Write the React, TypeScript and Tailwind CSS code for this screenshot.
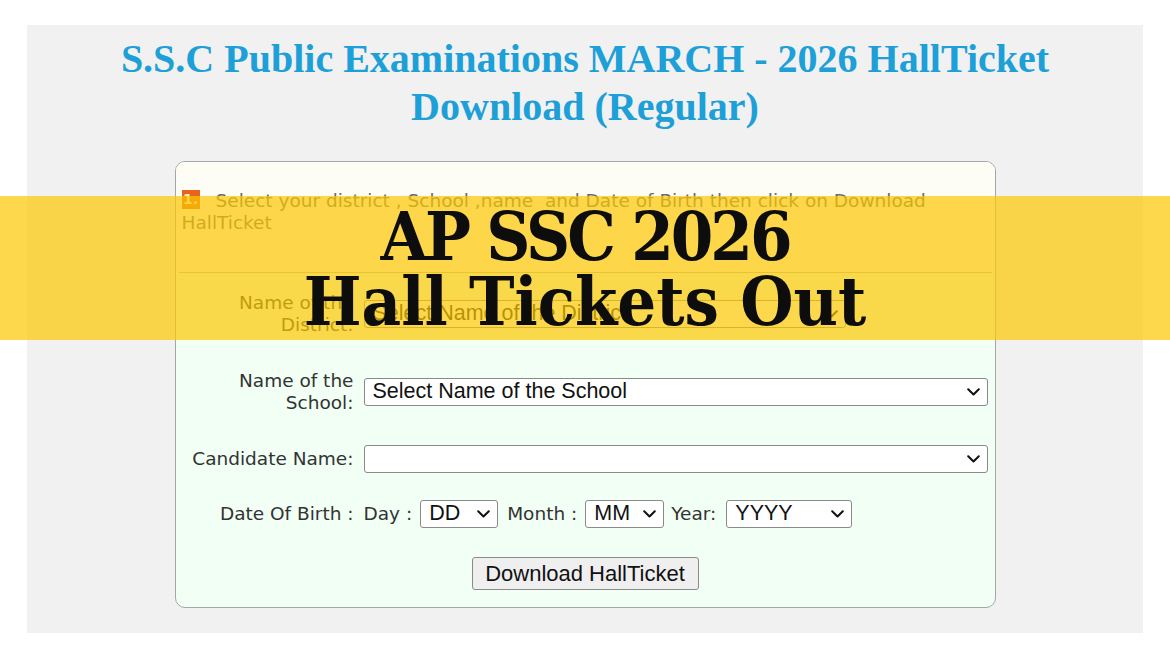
const verdana = { fontFamily: '"DejaVu Sans", Verdana, sans-serif' }

function Chevron() {
  return (
    <svg width="13" height="8" viewBox="0 0 13 8" className="shrink-0">
      <path d="M1.2 1.2 L6.5 6.5 L11.8 1.2" fill="none" stroke="#111" strokeWidth="2" strokeLinecap="round" strokeLinejoin="round" />
    </svg>
  )
}

function FakeSelect({ value, className }: { value?: string; className: string }) {
  return (
    <div
      className={`flex h-[28px] items-center justify-between rounded-[3px] border border-[#8a8a8a] bg-white pl-[8px] pr-[7px] text-[21.5px] leading-none text-[#111] ${className}`}
      style={{ fontFamily: '"Liberation Sans", Arial, sans-serif' }}
    >
      <span>{value}</span>
      <Chevron />
    </div>
  )
}

export default function App() {
  return (
    <main className="relative min-h-screen w-[1170px] h-[658px] overflow-hidden bg-white pt-[25px]">
      <section className="mx-[27px] h-[608px] bg-[#f1f1f1] pt-[10px]">
        <h1
          className="text-center text-[40px] font-bold leading-[48px] text-[#1d9fd8]"
          style={{ fontFamily: '"Liberation Serif", "Times New Roman", serif' }}
        >
          S.S.C Public Examinations MARCH - 2026 HallTicket
          <br />
          Download (Regular)
        </h1>

        <div className="mx-auto mt-[30px] w-[821px] h-[447px] overflow-hidden rounded-[10px] border border-[#a2a8a8] bg-[#f1fff5]">
          <div className="h-[110px] bg-[#fdfcf5] pl-[6px] pr-[6px] pt-[28px]">
            <p className="text-[18.5px] leading-[22px] text-[#6a6a6a]" style={verdana}>
              <span className="mr-[16px] inline-block h-[19px] w-[18px] bg-[#e66420] text-center align-[3px] text-[14px] font-bold leading-[19px] text-[#fff3c0]">
                1.
              </span>
              Select your district , School ,name&nbsp; and Date of Birth then click on Download HallTicket
            </p>
          </div>
          <div className="mx-[3px] h-px bg-[#b8b8b0]" />

          <div className="text-[18.5px] text-[#333]" style={verdana}>
            <div className="mt-[19px] flex items-center">
              <label className="w-[178px] text-right leading-[22px]">
                Name of the
                <br />
                District:
              </label>
              <FakeSelect value="Select Name of the District" className="ml-[10px] w-[482px]" />
            </div>

            <div className="mt-[34px] flex items-center">
              <label className="w-[178px] text-right leading-[22px]">
                Name of the
                <br />
                School:
              </label>
              <FakeSelect value="Select Name of the School" className="ml-[10px] w-[624px]" />
            </div>

            <div className="mt-[31px] flex items-center">
              <label className="w-[178px] text-right leading-[22px]">Candidate Name:</label>
              <FakeSelect className="ml-[10px] w-[624px]" />
            </div>

            <div className="mt-[27px] flex items-center">
              <label className="w-[178px] text-right leading-[22px]">Date Of Birth :</label>
              <span className="ml-[10px]">Day :</span>
              <FakeSelect value="DD" className="ml-[8px] w-[78px]" />
              <span className="ml-[9px]">Month :</span>
              <FakeSelect value="MM" className="ml-[8px] w-[79px]" />
              <span className="ml-[7px]">Year:</span>
              <FakeSelect value="YYYY" className="ml-[10px] w-[126px]" />
            </div>

            <div className="mt-[29px] flex justify-center">
              <button
                className="h-[33px] w-[227px] rounded-[3px] border border-[#8a8a8a] bg-[#efefef] text-[22px] leading-none text-[#111]"
                style={{ fontFamily: '"Liberation Sans", Arial, sans-serif' }}
              >
                Download HallTicket
              </button>
            </div>
          </div>
        </div>
      </section>

      {/* yellow banner over the form */}
      <div className="absolute left-0 top-[196px] flex h-[144px] w-full flex-col items-center justify-center bg-[rgba(252,199,0,0.7)] pt-[2px]">
        <p
          className="text-center text-[68px] font-bold leading-[65px] text-[#0d0d0d] font-stretch-condensed"
          style={{ fontFamily: '"DejaVu Serif Condensed", "DejaVu Serif", "Liberation Serif", serif' }}
        >
          <span className="tracking-[-3px]">AP SSC 2026</span>
          <br />
          Hall Tickets Out
        </p>
      </div>
    </main>
  )
}
